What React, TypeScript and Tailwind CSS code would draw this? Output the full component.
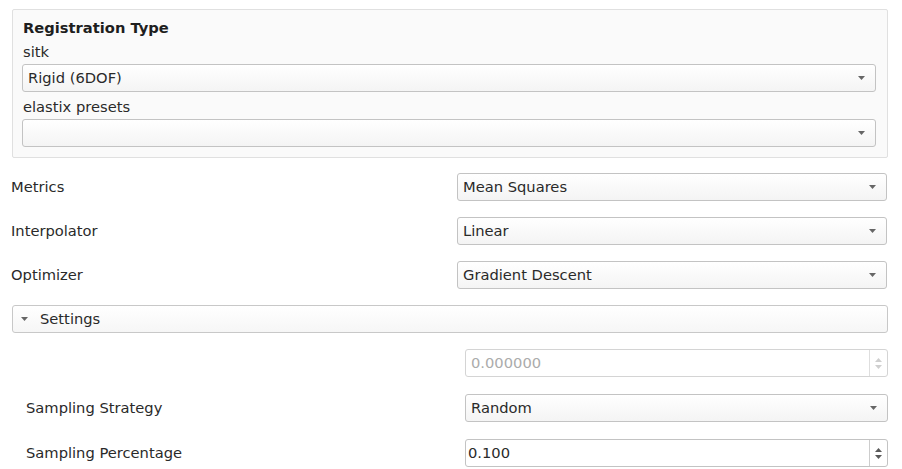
import React from 'react';

const font = "font-['DejaVu_Sans',sans-serif]";

const Caret: React.FC<{ className?: string }> = ({ className = '' }) => (
  <svg width="7" height="4" viewBox="0 0 7 4" className={className}>
    <path d="M0 0 L7 0 L3.5 4 Z" fill="currentColor" />
  </svg>
);

const Combo: React.FC<{ value: string; className?: string }> = ({ value, className = '' }) => (
  <div
    className={`h-[28px] flex items-center justify-between pl-[5px] pr-[10px] border border-[#c3c3c3] rounded-[3px] bg-gradient-to-b from-white to-[#f4f4f4] text-[#2a2a2a] ${className}`}
  >
    <span className="truncate">{value}</span>
    <Caret className="text-[#666666]" />
  </div>
);

const SpinBox: React.FC<{ value: string; disabled?: boolean; className?: string }> = ({
  value,
  disabled = false,
  className = '',
}) => (
  <div
    className={`h-[28px] flex items-stretch border rounded-[3px] bg-white ${
      disabled ? 'border-[#d4d4d4] text-[#ababab]' : 'border-[#c3c3c3] text-[#2a2a2a]'
    } ${className}`}
  >
    <div className={`flex-1 flex items-center ${disabled ? 'pl-[5px]' : 'pl-[2px]'}`}>{value}</div>
    <div
      className={`w-[18px] flex flex-col items-center justify-center gap-[3px] border-l ${
        disabled ? 'border-[#dedede] text-[#cfcfcf]' : 'border-[#cdcdcd] text-[#5a5a5a]'
      }`}
    >
      <Caret className="rotate-180" />
      <Caret />
    </div>
  </div>
);

const Row: React.FC<{ label: string; children: React.ReactNode }> = ({ label, children }) => (
  <div className="flex items-center h-[28px]">
    <div className="flex-1 text-[#2a2a2a]">{label}</div>
    {children}
  </div>
);

export default function App() {
  return (
    <div className={`${font} text-[14.7px] leading-[18px] bg-white w-[902px] h-[469px] pl-[11px] pr-[14px] pt-[9px]`}>
      <div className="ml-[1px] border border-[#e0e0e0] bg-[#fafafa] rounded-[2px] pl-[9px] pr-[11px] pt-[9px] pb-[10px] flex flex-col">
        <div className="font-bold text-[#1e1e1e] pl-[1px]">Registration Type</div>
        <div className="mt-[6px] text-[#2a2a2a] pl-[1px]">sitk</div>
        <Combo value="Rigid (6DOF)" className="mt-[3px]" />
        <div className="mt-[6px] text-[#2a2a2a] pl-[1px]">elastix presets</div>
        <Combo value="" className="mt-[3px]" />
      </div>

      <div className="mt-[15px] flex flex-col gap-[16px]">
        <Row label="Metrics">
          <Combo value="Mean Squares" className="w-[430px] mr-[1px]" />
        </Row>
        <Row label="Interpolator">
          <Combo value="Linear" className="w-[430px] mr-[1px]" />
        </Row>
        <Row label="Optimizer">
          <Combo value="Gradient Descent" className="w-[430px] mr-[1px]" />
        </Row>

        <div className="ml-[1px] h-[28px] flex items-center border border-[#c8c8c8] rounded-[3px] bg-gradient-to-b from-white to-[#f6f6f6] pl-[8px] text-[#2a2a2a]">
          <Caret className="text-[#666666]" />
          <span className="ml-[12px]">Settings</span>
        </div>
      </div>

      <div className="mt-[16px] pl-[15px] flex flex-col gap-[17px]">
        <div className="flex items-center h-[28px]">
          <div className="flex-1" />
          <SpinBox value="0.000000" disabled className="w-[423px]" />
        </div>
        <Row label="Sampling Strategy">
          <Combo value="Random" className="w-[423px]" />
        </Row>
        <Row label="Sampling Percentage">
          <SpinBox value="0.100" className="w-[423px]" />
        </Row>
      </div>
    </div>
  );
}
